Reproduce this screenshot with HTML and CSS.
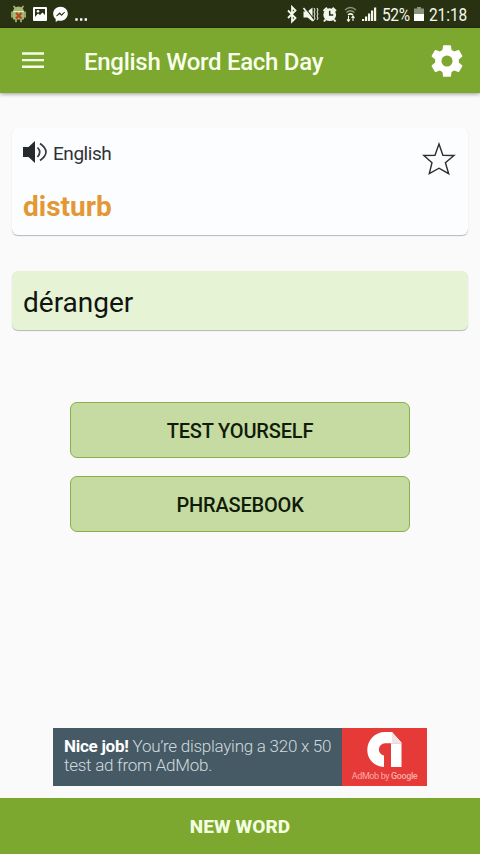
FILE: index.html
```html
<!DOCTYPE html>
<html lang="en">
<head>
<meta charset="utf-8">
<title>English Word Each Day</title>
<link rel="stylesheet" href="styles.css">
</head>
<body>
<div class="app">
  <div class="status">
    <svg class="status-left" width="90" height="28" viewBox="0 0 90 28">
      <path d="M13 12a5.500 5.500 0 0 1 11 0v7.500H13z" fill="#a9b877"/>
      <path d="M14 6.500l2 2.500M23 6.500l-2 2.500M12 12v5M25 12v5M16 19v2.500M21 19v2.500" stroke="#a9b877" stroke-width="1.700" stroke-linecap="round"/>
      <path d="M13 11.500h11" stroke="#e3e8c4"/>
      <path d="M16 13l5.500 5.500M21.500 13L16 18.500" stroke="#b8471c" stroke-width="2.400"/>
      <path fill-rule="evenodd" d="M34 7h12q1 0 1 1v12q0 1-1 1H34q-1 0-1-1V8q0-1 1-1zm1 2v8l3-3.500 2 1.500 2.500-2.500L45 15V9z" fill="#fff"/>
      <circle cx="38" cy="11.300" r="1.300" fill="#fff"/>
      <path d="M60.500 6.800c-4.200 0-7.300 3-7.300 6.900 0 2.200 1 4 2.500 5.300v3l2.500-1.500c4.900 1.300 9.600-1.900 9.600-6.800 0-3.900-3.100-6.900-7.300-6.900z" fill="#fff"/>
      <path d="M56.500 16l3-3.300 2 1.700 3.200-2.200-3 3.400-2-1.700z" fill="#263010" stroke="#263010" stroke-width=".7"/>
      <path d="M75.300 18.300h2.400v2.400h-2.400zM80 18.300h2.400v2.400H80zM84.600 18.300H87v2.400h-2.400z" fill="#fff"/>
    </svg>
    <svg class="status-right" width="98" height="28" viewBox="282 0 98 28">
      <path d="M288 10.500l7.500 7.500-3.500 3.500V7l3.500 3.500L288 18" fill="none" stroke="#f4f7ec" stroke-width="1.800"/>
      <path d="M303.500 11.500h4l5-4v14l-5-4h-4z" fill="#f4f7ec"/>
      <path d="M305 7.500l9 12" stroke="#283111" stroke-width="1.200"/>
      <path d="M303.500 8l10 13" stroke="#f4f7ec" stroke-width="1.600"/>
      <path d="M314 8l1 2-1 2 1 2-1 2 1 2-1 2M317 8l1 2-1 2 1 2-1 2 1 2-1 2" fill="none" stroke="#f4f7ec" stroke-width="1"/>
      <circle cx="329.700" cy="14.700" r="6.400" fill="#f4f7ec"/>
      <path d="M323.500 11l3.500-3.200M336 11l-3.500-3.200M325.500 19.500l-1.500 2M334 19.500l1.500 2" stroke="#f4f7ec" stroke-width="2"/>
      <path d="M329.700 10.700v4.300h3.500" fill="none" stroke="#283111" stroke-width="1.500"/>
      <path d="M345 10q5.500-5 11 0M346.500 12.500q4-3.500 8 0" fill="none" stroke="#8d957b" stroke-width="1.500"/>
      <path d="M348 15q2.500-2.200 5 0" fill="none" stroke="#f4f7ec" stroke-width="1.600"/>
      <path d="M348.500 16v5m-1.500-1.700l1.500 2 1.500-2M353 21v-4.500m-1.500 1.500l1.500-2 1.500 2" fill="none" stroke="#f4f7ec" stroke-width="1.100"/>
      <path d="M362 19h2.200v2H362zM365 16.500h2.200V21H365zM368 13.500h2.200V21H368zM371 10.500h2.200V21H371zM374 7.500h2.200V21H374z" fill="#f4f7ec"/>
    </svg>
    <span class="percent">52%</span>
    <svg class="battery" width="10" height="15" viewBox="0 0 10 15"><path d="M3 0h4v1.500h3V7H0V1.500h3z" fill="#8b9379"/><path d="M0 7h10v7H0z" fill="#fff"/></svg>
    <span class="clock">21:18</span>
  </div>
  <header class="bar">
    <svg class="menu" width="22" height="17" viewBox="0 0 22 17"><path d="M0 1.500h22M0 8.100h22M0 14.700h22" stroke="#f8ffe9" stroke-width="2.400"/></svg>
    <h1 class="title">English Word Each Day</h1>
    <svg class="gear" width="38" height="38" viewBox="0 0 24 24"><path fill="#fff" d="M19.430 12.980c.04-.32.070-.64.070-.98s-.03-.66-.07-.98l2.110-1.650c.19-.15.240-.42.120-.64l-2-3.460c-.12-.22-.39-.3-.61-.22l-2.490 1c-.52-.4-1.080-.73-1.690-.98l-.38-2.650C14.460 2.180 14.250 2 14 2h-4c-.25 0-.46.180-.49.420l-.38 2.650c-.61.250-1.170.590-1.690.980l-2.490-1c-.23-.09-.49 0-.61.220l-2 3.460c-.13.220-.07.490.12.640l2.110 1.650c-.04.320-.07.650-.07.980s.03.660.07.980l-2.110 1.650c-.19.150-.24.420-.12.640l2 3.460c.12.220.39.300.61.220l2.490-1c.52.400 1.080.730 1.690.980l.38 2.650c.03.240.240.420.490.420h4c.25 0 .46-.18.490-.42l.38-2.650c.61-.25 1.170-.59 1.690-.98l2.490 1c.23.090.49 0 .61-.22l2-3.460c.12-.22.070-.49-.12-.64zM12 15.500a3.500 3.500 0 1 1 0-7 3.500 3.500 0 0 1 0 7z"/></svg>
  </header>
  <main class="content">
    <section class="card word">
      <div class="word-main">
        <div class="lang">
          <svg width="25" height="22" viewBox="0 0 25 22"><path d="M0 6h5.500L12 0v22l-6.500-6H0z" fill="#272a2c"/><path d="M14.500 6.500q4.500 4.500 0 9.500M17 2.500q12 8.500 0 17" fill="none" stroke="#36393b" stroke-width="1.700"/></svg>
          <span>English</span>
        </div>
        <div class="term">disturb</div>
      </div>
      <svg class="star" width="34" height="34" viewBox="0 0 34 34"><path d="M17 2l3.900 11.200 11.100.3-8.600 7.200 3.300 11L17 26.200l-9.700 5.500 2.700-11-8.200-7.200 11.200-.3z" fill="none" stroke="#2b2e30" stroke-width="1.400"/></svg>
    </section>
    <section class="card translation">déranger</section>
    <div class="actions">
      <button class="action">TEST YOURSELF</button>
      <button class="action">PHRASEBOOK</button>
    </div>
    <aside class="ad">
      <p class="ad-text"><b>Nice job!</b> You’re displaying a 320 x 50<br>test ad from AdMob.</p>
      <div class="ad-brand">
        <svg width="36" height="36" viewBox="0 0 36 36"><path d="M18 0h7l9.500 10.500V35H24V11.300h-6a6.200 6.200 0 0 0-1 12.300V35C7 34.500.3 27 .3 18 .3 8 8 0 18 0z" fill="#fff"/><path d="M25 0v11.500h9.500z" fill="#f1e3e1"/><path d="M24 11.500h10" stroke="#e9c9c5" stroke-width=".7"/></svg>
        <span class="by">AdMob by <b>Google</b></span>
      </div>
    </aside>
  </main>
  <button class="new-word">NEW WORD</button>
</div>
</body>
</html>
```
FILE: styles.css
```css
* { box-sizing: border-box; }
body { margin: 0; font-family: Roboto, sans-serif; background: #fafafa; color: #101510; }
button { font-family: inherit; margin: 0; padding: 0; }
svg { display: block; flex-shrink: 0; }
.app { width: 480px; height: 854px; display: flex; flex-direction: column; overflow: hidden; }
.status { height: 28px; background: #283111; display: flex; align-items: center; color: #f4f7ec; font-size: 18px; line-height: 28px; flex-shrink: 0; white-space: nowrap; }
.status-right { margin-left: 192px; }
.percent, .clock { padding-top: 2px; transform: scaleX(.86); transform-origin: left; }
.percent { width: 32px; margin-left: 2px; margin-right: -2px; letter-spacing: -.4px; }
.battery { margin: 0 5px 0 2px; }
.clock { letter-spacing: -.1px; }
.bar { height: 65px; background: #7ca82f; display: flex; align-items: center; padding: 0 14px 0 22px; flex-shrink: 0; box-shadow: 0 1px 4px rgba(0, 0, 0, .4); z-index: 1; }
.title { margin: 3px 0 0 40px; font-size: 24px; font-weight: 500; line-height: 32px; color: #f9ffed; letter-spacing: -.28px; white-space: nowrap; flex: 1; }
.content { flex: 1; padding: 35px 12px 0; display: flex; flex-direction: column; }
.card { border-radius: 6px; box-shadow: 0 1px 1px rgba(0, 0, 0, .27); }
.word { height: 107px; background: #fcfdff; display: flex; justify-content: space-between; padding: 13px 12px 0 11px; }
.lang { display: flex; align-items: center; gap: 5px; height: 23px; font-size: 19px; letter-spacing: -.45px; color: #303335; }
.lang span { padding-top: 2px; }
.lang svg { margin-top: -1px; }
.term { margin-top: 26px; font-size: 28px; line-height: 34px; font-weight: 700; color: #e39835; }
.star { margin-top: 1px; }
.translation { margin-top: 36px; height: 59px; background: #e7f3d5; padding: 2px 11px 0; font-size: 28px; line-height: 59px; }
.actions { margin: 72px auto 0; display: grid; gap: 18px; }
.action { width: 340px; height: 56px; border: 1px solid #87b04a; border-radius: 7px; background: #c5dba1; color: #111b0a; font-size: 20px; font-weight: 500; letter-spacing: -.18px; padding-top: 1px; }
.ad { margin: auto 41px 12px; height: 58px; display: flex; background: #465a65; }
.ad-text { margin: 0; width: 289px; padding: 9px 0 0 11px; font-size: 17px; line-height: 19px; font-weight: 300; letter-spacing: -.26px; color: #d1dbdf; white-space: nowrap; }
.ad-text b { font-weight: 700; color: #fff; }
.ad-brand { flex: 1; background: #e53a37; display: flex; flex-direction: column; align-items: center; padding-top: 4px; }
.by { font-size: 9px; line-height: 11px; margin-top: 3px; letter-spacing: -.38px; color: #f9aaa7; white-space: nowrap; }
.by b { font-weight: 500; }
.new-word { height: 56px; border: 0; background: #7ca82f; color: #f4ffe0; font-size: 19px; font-weight: 800; letter-spacing: .1px; padding-top: 1px; flex-shrink: 0; }
```
